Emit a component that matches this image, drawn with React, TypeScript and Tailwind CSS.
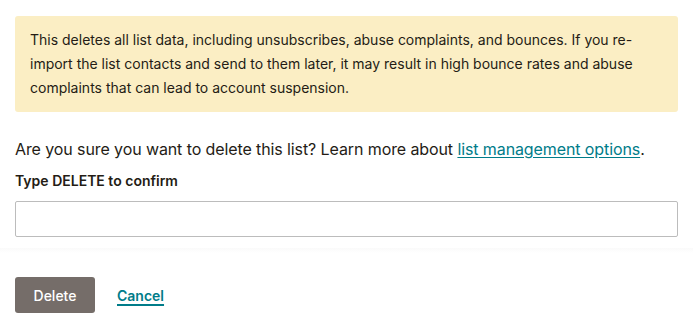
export default function App() {
  return (
    <div className="w-[693px] h-[323px] bg-white text-[#241c15] font-['Inter',sans-serif]">
      <div className="px-[15px] pt-4">
        <div className="rounded-[3px] bg-[#fbeec4] px-[15px] py-3 text-[14px] leading-6">
          This deletes all list data, including unsubscribes, abuse complaints, and bounces. If you re-import the list
          contacts and send to them later, it may result in high bounce rates and abuse complaints that can lead to
          account suspension.
        </div>

        <p className="mt-[25px] text-[16px] leading-6 tracking-[-0.1px]">
          Are you sure you want to delete this list? Learn more about{' '}
          <a href="#" className="text-[#007c89] underline underline-offset-2">
            list management options
          </a>
          .
        </p>

        <label className="mt-[10px] block text-[14px] font-semibold leading-5">Type DELETE to confirm</label>
        <input
          type="text"
          className="mt-[10px] block h-9 w-full rounded-[2px] border border-[#bcbcbc] bg-white px-3 text-[15px] outline-none"
        />
      </div>

      <div className="mt-[11px] h-[5px] bg-gradient-to-b from-[#fafafa] to-white" />

      <div className="flex items-center gap-[22px] px-[15px] pt-[24px]">
        <button className="h-9 w-20 rounded-[3px] bg-[#756d69] text-[14px] font-medium text-white">Delete</button>
        <a href="#" className="text-[14px] font-semibold text-[#007c89] underline underline-offset-[3px] decoration-2">
          Cancel
        </a>
      </div>
    </div>
  );
}
